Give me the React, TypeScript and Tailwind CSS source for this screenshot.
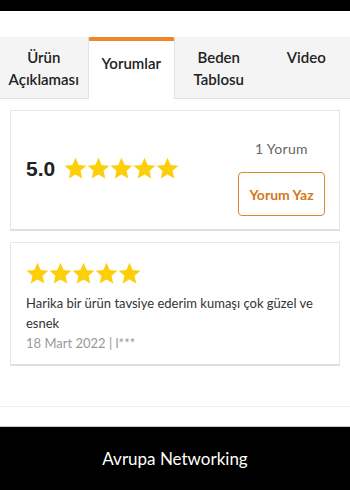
import React from 'react';

const Star = ({ size = 23 }: { size?: number }) => (
  <svg width={size} height={size} viewBox="0.6 0.8 22.8 22.8" className="shrink-0">
    <path
      d="M12 1.6l3.1 7.1 7.7.7-5.8 5.1 1.7 7.6L12 18.1l-6.7 4 1.7-7.6L1.2 9.4l7.7-.7z"
      fill="#fccf0a"
    />
  </svg>
);

const Stars = () => (
  <div className="flex">
    {[0, 1, 2, 3, 4].map((i) => (
      <Star key={i} />
    ))}
  </div>
);

const TABS = [
  { label: ['Ürün', 'Açıklaması'] },
  { label: ['Yorumlar'], active: true },
  { label: ['Beden', 'Tablosu'] },
  { label: ['Video'] },
];

export default function App() {
  return (
    <div className="w-[350px] h-[490px] bg-white flex flex-col overflow-hidden" style={{ fontFamily: 'Lato, "Noto Sans", sans-serif' }}>
      {/* top bar */}
      <div className="h-[11px] bg-black" />
      <div className="h-[26px]" />

      {/* tabs */}
      <div className="grid grid-cols-4 h-[62px] bg-[#f4f4f4] border-b border-[#e2e2e2]">
        {TABS.map((t, i) =>
          t.active ? (
            <div
              key={i}
              className="bg-white border-t-4 border-[#f0862a] rounded-t-[3px] border-x border-x-[#e4e4e4] -mb-px flex justify-center pt-[11px] text-[15px] leading-[22px] font-semibold text-[#222]"
            >
              {t.label[0]}
            </div>
          ) : (
            <div
              key={i}
              className="flex flex-col items-center pt-[9px] text-[15px] leading-[22px] font-semibold text-[#222]"
            >
              {t.label.map((l) => (
                <span key={l}>{l}</span>
              ))}
            </div>
          )
        )}
      </div>

      {/* content */}
      <div className="px-[10px] pt-[11px] flex flex-col gap-[11px]">
        <div className="h-[121px] border border-[#e6e6e6] border-b-2 border-b-[#e0e0e0] flex items-center justify-between pl-[15px] pr-[14px]">
          <div className="flex items-center gap-[9px] -mt-[3px]">
            <span className="text-[21px] font-bold text-[#222]" style={{ fontFamily: '"Liberation Sans", Arial, sans-serif' }}>
              5.0
            </span>
            <Stars />
          </div>
          <div className="flex flex-col items-center gap-[15px] mt-[16px]">
            <span className="text-[14px] leading-[17px] text-[#666] tracking-[0.3px]">1 Yorum</span>
            <button className="w-[87px] h-[44px] border border-[#d9892f] rounded-[4px] text-[14px] font-bold text-[#d4771b]">
              Yorum Yaz
            </button>
          </div>
        </div>

        <div className="h-[124px] border border-[#e6e6e6] border-b-2 border-b-[#e0e0e0] pl-[15px] pr-[14px] pt-[19px]">
          <Stars />
          <p className="mt-[8px] text-[13px] leading-[20px] text-[#333]">
            Harika bir ürün tavsiye ederim kumaşı çok güzel ve esnek
          </p>
          <p className="text-[13px] leading-[20px] text-[#999]">18 Mart 2022 | l***</p>
        </div>
      </div>

      <div className="flex-1" />
      <div className="h-[21px] border-t border-[#f0f0f0] border-b border-b-[#c8c8c8]" />
      <div className="h-[63px] bg-black flex items-center justify-center text-white text-[17px]">
        Avrupa Networking
      </div>
    </div>
  );
}
